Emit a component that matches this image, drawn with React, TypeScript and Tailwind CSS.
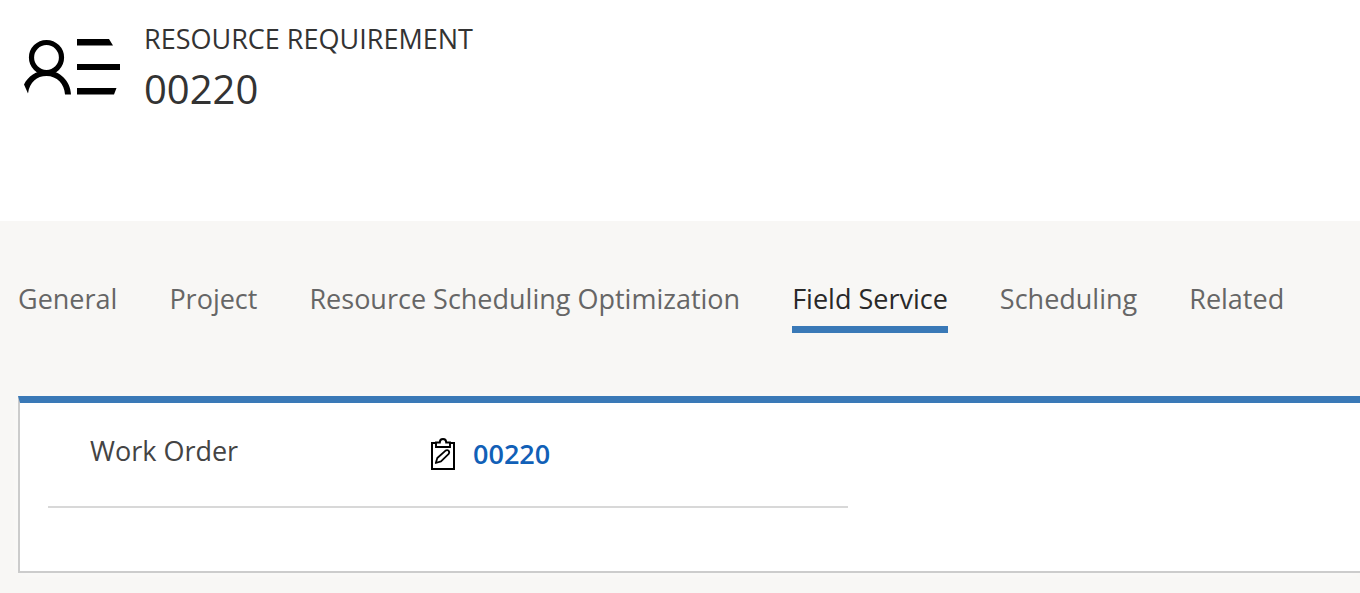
const tabs = [
  'General',
  'Project',
  'Resource Scheduling Optimization',
  'Field Service',
  'Scheduling',
  'Related',
];

const activeTab = 'Field Service';

function ResourceIcon() {
  return (
    <svg viewBox="0 0 96 56" className="h-14 w-24 shrink-0" fill="none" aria-hidden="true">
      <circle cx="22.5" cy="18.5" r="15" stroke="#000" strokeWidth="5.2" />
      <path
        d="M0 45.500C4 37.500 12 31.500 22.500 31.500C36 31.500 46.500 42 47 55.500H41C40.500 45 33 37 22.500 37C13 37 5.500 43 4 54.500Z"
        fill="#000"
      />
      <path d="M53 0H85L89 6.500H53ZM53 25H96V31H53ZM53 49H92.500L90 55.500H53Z" fill="#000" />
    </svg>
  );
}

function WorkOrderIcon() {
  return (
    <svg viewBox="0 0 24 32" className="h-8 w-6 shrink-0" fill="none" stroke="#000" aria-hidden="true">
      <path d="M5 5H1V31H23V5H19" strokeWidth="2" />
      <path d="M5 4.500H8.800C8.800 2.300 10.200 1 12 1S15.200 2.300 15.200 4.500H19V9H5Z" strokeWidth="1.900" />
      <path
        d="M4.800 25L6.300 20L14.300 12.800C16.800 11 19.200 13.300 17.700 15.900L10 23.300Z"
        strokeWidth="1.800"
        strokeLinejoin="round"
      />
    </svg>
  );
}

export default function App() {
  return (
    <div className="flex min-h-screen flex-col bg-[#f8f7f5] font-['Open_Sans',sans-serif] text-[#333333]">
      <header className="flex items-start gap-6 bg-white px-6 pt-[19px] pb-[104px]">
        <div className="pt-5">
          <ResourceIcon />
        </div>
        <div>
          <p className="text-[27px] leading-[40px]">RESOURCE REQUIREMENT</p>
          <h1 className="pt-[2px] text-[40px] leading-[56px]">00220</h1>
        </div>
      </header>

      <main className="pt-[58px] pb-5 pl-[18px]">
        <div role="tablist" className="flex gap-[52px]">
          {tabs.map((tab) => (
            <button
              key={tab}
              type="button"
              role="tab"
              aria-selected={tab === activeTab}
              className={
                tab === activeTab
                  ? 'border-b-[7px] border-[#3a79b7] pb-[7px] text-[27px] leading-[40px] whitespace-nowrap text-[#292929]'
                  : 'border-b-[7px] border-transparent pb-[7px] text-[27px] leading-[40px] whitespace-nowrap text-[#666666]'
              }
            >
              {tab}
            </button>
          ))}
        </div>

        <section
          role="tabpanel"
          aria-label="Field Service"
          className="mt-[63px] border-t-[7px] border-b-2 border-l-2 border-t-[#3a79b7] border-b-[#cccccc] border-l-[#cccccc] bg-white px-7 pb-[63px] shadow-[0_0_10px_rgba(255,255,255,0.5)]"
        >
          <dl className="flex max-w-[800px] items-start border-b-2 border-[#d8d8d8] pt-7 pb-8 pl-[42px]">
            <dt className="w-[341px] text-[27px] leading-[40px] text-[#444444]">Work Order</dt>
            <dd className="pt-[3px]">
              <a href="#work-order" className="flex items-center gap-[18px] text-[27px] leading-[40px] font-semibold text-[#1160b7]">
                <WorkOrderIcon />
                00220
              </a>
            </dd>
          </dl>
        </section>
      </main>
    </div>
  );
}
